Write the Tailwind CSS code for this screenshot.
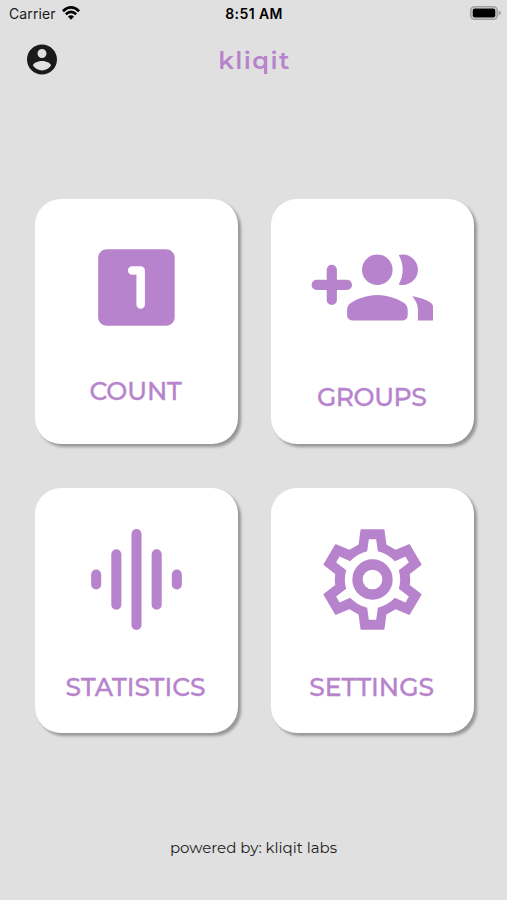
<!DOCTYPE html>
<html lang="en">
<head>
  <meta charset="UTF-8" />
  <meta name="viewport" content="width=device-width, initial-scale=1.0"/>
  <title>kliqit</title>
  <script src="https://cdn.jsdelivr.net/npm/@tailwindcss/browser@4"></script>
</head>
<body class="bg-[#e0e0e0] h-[900px] overflow-hidden flex flex-col font-['Montserrat','Inter',sans-serif] text-[#b783cc]">
  <!-- Status bar -->
  <div class="h-[26px] shrink-0 grid grid-cols-3 items-center pl-[9px] pr-[6px] font-['Inter',sans-serif] text-[14px] text-[#1a1a1a]">
    <div class="flex items-center gap-[6px]">
      <span class="tracking-[0.1px]">Carrier</span>
      <svg class="w-[18px] h-[14px]" viewBox="0 0 18 14" fill="none" stroke="#000" stroke-width="2.7">
        <path d="M.9 5.2Q9-2.3 17.1 5.2"/>
        <path d="M3.8 8.3Q9 3.6 14.2 8.3"/>
        <path d="M9 13.8L5.9 10.6Q9 8.1 12.1 10.6Z" fill="#000" stroke="none"/>
      </svg>
    </div>
    <span class="pr-[2px] text-center font-semibold tracking-[0.4px] text-black">8:51 AM</span>
    <svg class="justify-self-end w-[31px] h-[14px]" viewBox="0 0 31 14">
      <rect x=".8" y=".8" width="26.4" height="12.4" rx="3.8" fill="#d8d8d8" stroke="#a0a0a0" stroke-width="1.6"/>
      <rect x="2.7" y="2.4" width="22.6" height="9.2" rx="2" fill="#000"/>
      <path d="M28.6 4.5Q31 5.3 31 7T28.6 9.5Z" fill="#a0a0a0"/>
    </svg>
  </div>

  <!-- Header -->
  <div class="h-[66px] shrink-0 grid grid-cols-3 items-center px-[24px]">
    <svg class="w-9 h-9" viewBox="0 -0.4 24 24" fill="#1a1a1a">
      <path d="M12 2C6.48 2 2 6.48 2 12s4.48 10 10 10 10-4.48 10-10S17.52 2 12 2zm0 3c1.66 0 3 1.34 3 3s-1.34 3-3 3-3-1.34-3-3 1.34-3 3-3zm0 14.2c-2.5 0-4.71-1.28-6-3.22.03-1.99 4-3.08 6-3.08 1.99 0 5.97 1.09 6 3.08-1.29 1.94-3.5 3.22-6 3.22z"/>
    </svg>
    <h1 class="pt-[3px] pl-[2px] text-center text-[24.5px] font-semibold tracking-[1.4px]">kliqit</h1>
  </div>

  <!-- Menu cards -->
  <div class="mt-[107.4px] ml-[34.6px] grid grid-cols-[203px_203px] grid-rows-[245px_245px] gap-x-[33px] gap-y-[43.5px]">
    <button class="bg-white rounded-[26px] shadow-[3px_3px_3px_rgba(0,0,0,0.33)] flex flex-col items-center justify-center gap-[36px]">
      <svg class="w-[102px] h-[102px]" viewBox="-0.1 0.1 24 24" fill="currentColor">
        <path d="M19 3H5c-1.1 0-2 .9-2 2v14c0 1.1.9 2 2 2h14c1.1 0 2-.9 2-2V5c0-1.1-.9-2-2-2zm-6 14c-.55 0-1-.45-1-1V9h-1c-.55 0-1-.45-1-1s.45-1 1-1h2c.55 0 1 .45 1 1v8c0 .55-.45 1-1 1z"/>
      </svg>
      <span class="pt-px pr-px text-[25px] leading-[30px] font-medium tracking-[-0.1px] [-webkit-text-stroke:0.35px]">COUNT</span>
    </button>

    <button class="bg-white rounded-[26px] shadow-[3px_3px_3px_rgba(0,0,0,0.33)] flex flex-col items-center justify-center gap-[31px]">
      <svg class="w-[122px] h-[121px]" viewBox="310.9 230.8 122 121" fill="currentColor">
        <path d="M331.7 270.6v30.2M316.6 285.7h30.2" stroke="currentColor" stroke-width="10.2" stroke-linecap="round"/>
        <circle cx="377.2" cy="270.6" r="15.3"/>
        <path d="M398.6 255.9a15.2 15.2 0 1 1 0 29.3Q402.6 278 402.6 270.6T398.6 255.9Z"/>
        <path d="M347 310.5c0-2.9 1.5-5.5 4.1-7 6.4-3.9 15.5-7.7 26.2-7.7s19.8 3.8 26.2 7.7c2.6 1.5 4.1 4.1 4.1 7v5.7a5 5 0 0 1-5 5h-50.6a5 5 0 0 1-5-5Z"/>
        <path d="M411.9 297c9 1.3 15.4 4.1 18.5 6.4 2.2 1.7 3 4 3 6.8v9.5a1.5 1.5 0 0 1-1.5 1.5h-14.1v-10.7c0-5.4-2.7-10.1-5.9-13.5Z"/>
      </svg>
      <span class="pb-px pr-px text-[25px] leading-[30px] font-medium tracking-[-0.4px] [-webkit-text-stroke:0.35px]">GROUPS</span>
    </button>

    <button class="bg-white rounded-[26px] shadow-[3px_3px_3px_rgba(0,0,0,0.33)] flex flex-col items-center justify-center gap-[31px]">
      <svg class="w-[121px] h-[121px]" viewBox="0 0 24 24" stroke="currentColor" stroke-width="2" stroke-linecap="round">
        <path d="M4 11v2M8 7v10M12 3v18M16 7v10M20 11v2"/>
      </svg>
      <span class="pt-px pr-px text-[25px] leading-[30px] font-medium [-webkit-text-stroke:0.35px]">STATISTICS</span>
    </button>

    <button class="bg-white rounded-[26px] shadow-[3px_3px_3px_rgba(0,0,0,0.33)] flex flex-col items-center justify-center gap-[31px]">
      <svg class="w-[121px] h-[121px]" viewBox="0 0 363 363" fill="currentColor">
        <g transform="translate(-155.5 -116.5)">
          <path stroke="currentColor" stroke-width="6" stroke-linejoin="round" d="M304 150H370L376 195L406 212L447 195L481 253L446 280Q448 298 446 316L481 343L447 401L406 384L376 401L370 446H304L298 401L268 384L227 401L193 343L228 316Q226 298 228 280L193 253L227 195L268 212L298 195Z"/>
          <path fill="#fff" d="M326 177H348L353 213Q382 220 404 243L436 229L446 247L416 270Q424 298 416 326L446 349L436 367L404 353Q382 376 353 383L348 419H326L321 383Q292 376 270 353L238 367L228 349L258 326Q250 298 258 270L228 247L238 229L270 243Q292 220 321 213Z"/>
          <circle cx="337" cy="298" r="45" fill="none" stroke="currentColor" stroke-width="31"/>
        </g>
      </svg>
      <span class="pt-px pr-px text-[25px] leading-[30px] font-medium [-webkit-text-stroke:0.35px]">SETTINGS</span>
    </button>
  </div>

  <!-- Footer -->
  <p class="mt-auto mb-[40px] text-center text-[15px] leading-[24px] text-[#222]">powered by: kliqit labs</p>
</body>
</html>
